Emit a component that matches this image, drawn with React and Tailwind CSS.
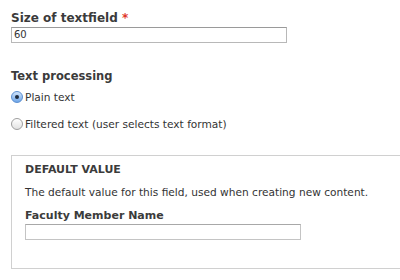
export default function App() {
  return (
    <div className="w-[400px] h-[280px] overflow-hidden bg-white text-[#333] font-['DejaVu_Sans',sans-serif] pl-[11px] pt-[11px]">
      <div className="text-[12px] font-bold leading-[14px] text-[#3b3b3b]">
        Size of textfield <span className="text-[#e0362b]">*</span>
      </div>
      <div className="mt-[2px] w-[276px] h-[16px] border border-[#b8b8b8] border-t-[#9a9a9a] text-[10px] leading-[14px] pl-[2px] text-[#333]">
        60
      </div>

      <div className="mt-[26px] text-[11.5px] font-bold leading-[14px] text-[#3b3b3b]">Text processing</div>

      <div className="mt-[7px] flex items-center gap-[2px] h-[14px]">
        <span className="w-[12px] h-[12px] rounded-full border border-[#5b8fd1] bg-gradient-to-b from-[#cfe3fa] to-[#6fa6e8] flex items-center justify-center">
          <span className="w-[4px] h-[4px] rounded-full bg-[#1c2a3d]" />
        </span>
        <span className="text-[10.6px] leading-[14px]">Plain text</span>
      </div>
      <div className="mt-[13px] flex items-center gap-[2px] h-[14px]">
        <span className="w-[12px] h-[12px] rounded-full border border-[#9e9e9e] bg-gradient-to-b from-[#ffffff] to-[#e2e2e2]" />
        <span className="text-[10.6px] leading-[14px]">Filtered text (user selects text format)</span>
      </div>

      <div className="mt-[24px] w-[400px] h-[114px] border border-[#d0d0d0] pl-[13px] pt-[7px]">
        <div className="text-[11px] font-bold leading-[14px] text-[#3b3b3b]">DEFAULT VALUE</div>
        <div className="mt-[8px] text-[10.6px] leading-[14px]">The default value for this field, used when creating new content.</div>
        <div className="mt-[10px] text-[11px] font-bold leading-[14px] text-[#3b3b3b]">Faculty Member Name</div>
        <div className="mt-[1px] w-[276px] h-[16px] border border-[#c4c4c4] border-t-[#a8a8a8]" />
      </div>
    </div>
  );
}
